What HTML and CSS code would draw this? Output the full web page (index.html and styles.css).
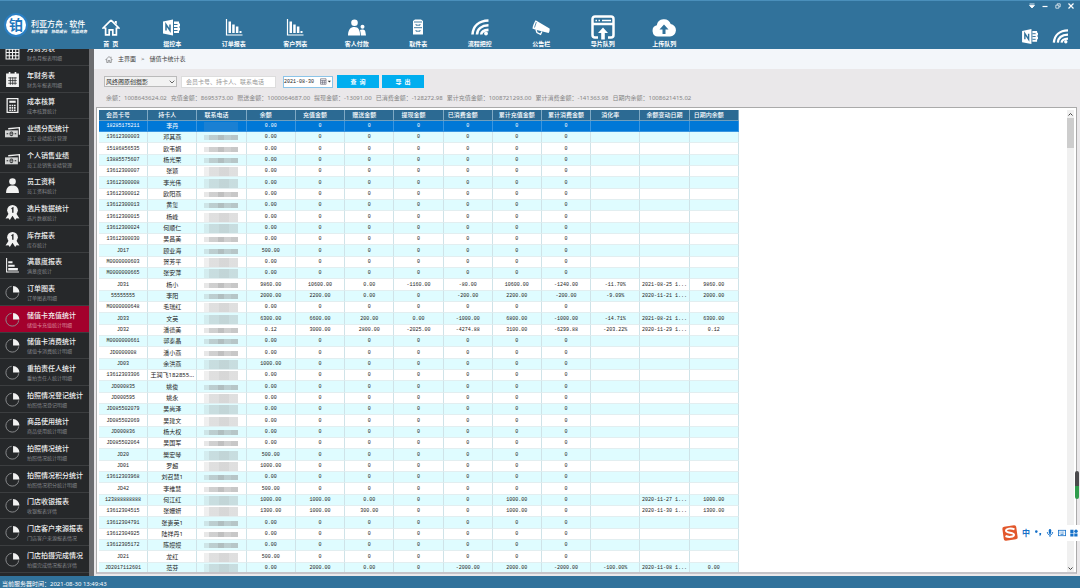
FILE: index.html
```html
<!DOCTYPE html>
<html lang="zh-CN">
<head>
<meta charset="UTF-8" />
<meta name="viewport" content="width=device-width, initial-scale=1" />
<title>利亚方舟·软件 - 储值卡统计表</title>
<link rel="stylesheet" href="styles.css">
</head>
<body>
  <!-- icon sprite -->
  <svg class="sprite" aria-hidden="true">
    <symbol id="i-home" viewBox="0 0 18 17"><path d="M9 1.2 1.2 9h2.3M9 1.2 16.8 9h-2.3M3.6 8.6v7.3h3.6v-5h3.6v5h3.6V8.6" fill="none" stroke="currentColor" stroke-width="1.7"/><path d="M12.8 2h2v3.4l-2-2z" fill="currentColor"/></symbol>
    <symbol id="i-note" viewBox="0 0 18 16"><path d="M0 2 10 0v16L0 14z" fill="currentColor"/><path d="M11 2h5v2h1v3h-1v1h1v3h-1v2.500h-5z" fill="currentColor"/><path d="M11 5h3.500M11 8h3.500M11 11h3.500" stroke="#31729b" stroke-width="1"/><path d="M3 11V5l4 6V5" fill="none" stroke="#31729b" stroke-width="1.5"/></symbol>
    <symbol id="i-chart" viewBox="0 0 18 17"><path d="M1.500 0v16H17.500" fill="none" stroke="currentColor" stroke-width="1.200"/><path d="M3.500 2.500h2.500V14H3.500zM7.200 5.500h2.500V14H7.200zM10.900 7.500h2.500V14h-2.500zM14.500 12h2v2h-2z" fill="currentColor"/></symbol>
    <symbol id="i-people" viewBox="0 0 18 17"><circle cx="6.500" cy="3.700" r="3.300" fill="currentColor"/><path d="M0 16.500c0-6 2.500-8.500 6.500-8.500s5.500 3 5.500 8.500z" fill="currentColor"/><circle cx="14.500" cy="7.800" r="2" fill="currentColor"/><path d="M12.800 16.500c0-3-.5-4-.8-5.500 1-.8 5-1 5.300 1.500l.7 4z" fill="currentColor"/></symbol>
    <symbol id="i-cabinet" viewBox="0 0 12 17"><path d="M1 2 3 .5h6L11 2v13.500H1z" fill="currentColor"/><path d="M2 3h8M2 8.700h8M4 5v1.200h4V5M4 11v1.200h4V11" fill="none" stroke="#31729b" stroke-width=".9"/></symbol>
    <symbol id="i-feed" viewBox="0 0 18 17"><g fill="none" stroke="currentColor" stroke-width="2.600"><path d="M1.500 15.500C2 7 8 1.800 17.500 1.500"/><path d="M6 15.500c.3-5.500 4.500-9 11.500-9.200"/><path d="M10.200 15.500c.2-2.800 2.800-4.400 7.300-4.600"/></g><circle cx="15" cy="14.500" r="1.900" fill="currentColor"/></symbol>
    <symbol id="i-horn" viewBox="0 0 20 17"><path d="M4 .5C2.500 3 1 6 .5 9.500L4 11l14.500 3.500c1-1.500 1.400-3.200 1-5z" fill="currentColor"/><path d="M4.500 11l1 3.200 4 1.800 1.500-3" fill="none" stroke="currentColor" stroke-width="1.500"/><path d="M4.800 2.500 2.800 8.500" fill="none" stroke="#31729b" stroke-width=".9"/></symbol>
    <symbol id="i-export" viewBox="0 0 24 25"><path d="M7 22.500H4A2.500 2.500 0 0 1 1.500 20V4A2.500 2.500 0 0 1 4 1.500h16A2.500 2.500 0 0 1 22.500 4v16a2.500 2.500 0 0 1-2.500 2.500h-3M1.500 9h21" fill="none" stroke="currentColor" stroke-width="2.500"/><path d="M4.500 5.500h1.500M7.500 5.500h1.500M11 5.500h9" stroke="currentColor" stroke-width="1.600"/><path d="M12 12.500 7 18h3.200v6.500h3.600V18H17z" fill="currentColor"/></symbol>
    <symbol id="i-cloud" viewBox="0 0 24 19"><path d="M6 18.500A5.700 5.700 0 0 1 4.800 7.300 7.200 7.200 0 0 1 18.700 6 6.300 6.300 0 0 1 18 18.500z" fill="currentColor"/><path d="M12 6.500 7.500 11.500h3V16h3v-4.500h3z" fill="#31729b"/></symbol>
    <symbol id="i-cal" viewBox="0 0 14 14"><path d="M1 1.500h2.500V0H5v1.500h4V0h1.500v1.500H13V14H1z" fill="currentColor"/><path d="M3 5.500h8M3 8h8M3 10.500h8M5 5v7M7.200 5v7M9.400 5v7" stroke="#26282a" stroke-width=".7"/></symbol>
    <symbol id="i-grid" viewBox="0 0 14 14"><path d="M1 1h12v12H1zM1 4h12M1 7h12M1 10h12M4 2v11M7 2v11M10 2v11" fill="none" stroke="currentColor" stroke-width="1"/></symbol>
    <symbol id="i-calc" viewBox="0 0 14 14"><path d="M2 .5h10v13H2z" fill="none" stroke="currentColor" stroke-width="1.200"/><path d="M4 3.500h6" stroke="currentColor" stroke-width="2"/><path d="M4 7h6M4 9.200h6M4 11.400h6" stroke="currentColor" stroke-width="1.500" stroke-dasharray="1.500 .7"/></symbol>
    <symbol id="i-cash" viewBox="0 0 14 14"><path d="M3 3.500 13.500 2.500v6.500" fill="none" stroke="currentColor" stroke-width="1.300"/><path d="M0 5h12v6.500H0z" fill="currentColor" opacity=".85"/><ellipse cx="6" cy="8.200" rx="1.800" ry="2.200" fill="#26282a"/><path d="M5 7.500h2M5 9h2" stroke="currentColor" stroke-width=".7"/><path d="M1.500 8.200h1.500M9 8.200h1.500" stroke="#26282a"/></symbol>
    <symbol id="i-user" viewBox="0 0 14 14"><circle cx="7" cy="3.300" r="3.100" fill="currentColor"/><path d="M1 14c0-4.500 2-7 6-7s6 2.500 6 7z" fill="currentColor"/></symbol>
    <symbol id="i-medal" viewBox="0 0 14 14"><circle cx="7" cy="5" r="5" fill="currentColor"/><path d="M3.500 8 .5 12.500l2.700-.2L4.500 14 7 10l2.500 4 1.300-1.700 2.700.2L10.500 8z" fill="currentColor"/><path d="M6 3.500 7.300 2.700v4.600" fill="none" stroke="#26282a" stroke-width="1.300"/></symbol>
    <symbol id="i-bars" viewBox="0 0 14 14"><path d="M1.500 0v13H13" fill="none" stroke="currentColor" stroke-width="1"/><path d="M3 3h4v2H3zM3 6.200h6v2H3zM3 9.400h9v2.200H3z" fill="currentColor"/></symbol>
    <symbol id="i-pie" viewBox="0 0 14 14"><path d="M6.200 1.200A6 6 0 1 0 12.800 7.800" fill="none" stroke="#8b8d8f" stroke-width=".9"/><path d="M7.500 1A6 6 0 0 1 13.500 7H7.500z" fill="currentColor"/></symbol>
  </svg>

  <header class="topbar">
    <div class="brand">
      <span class="brand-mark">铂</span>
      <div class="brand-text">
        <h1 class="brand-name">利亚方舟 · 软件</h1>
        <p class="brand-sub"><span>软件管理</span><span>协助成长</span><span>优盈商务</span></p>
      </div>
    </div>
    <nav class="mainnav">
      <a href="#"><svg class="ic"><use href="#i-home"/></svg>首&nbsp; 页</a>
      <a href="#"><svg class="ic"><use href="#i-note"/></svg>摄控本</a>
      <a href="#"><svg class="ic"><use href="#i-chart"/></svg>订单报表</a>
      <a href="#"><svg class="ic"><use href="#i-chart"/></svg>客户列表</a>
      <a href="#"><svg class="ic"><use href="#i-people"/></svg>客人付款</a>
      <a href="#"><svg class="ic"><use href="#i-cabinet"/></svg>取件表</a>
      <a href="#"><svg class="ic"><use href="#i-feed"/></svg>流程把控</a>
      <a href="#"><svg class="ic"><use href="#i-horn"/></svg>公告栏</a>
      <a href="#"><svg class="ic big"><use href="#i-export"/></svg>导片队列</a>
      <a href="#"><svg class="ic wide"><use href="#i-cloud"/></svg>上传队列</a>
    </nav>
    <div class="topright">
      <div class="winbtns">
        <button aria-label="菜单"><svg viewBox="0 0 6 6"><path d="M.5 1h5M.5 2.500h5L3 5z" fill="#fff" stroke="#fff" stroke-width=".8"/></svg></button>
        <button aria-label="最小化"><svg viewBox="0 0 6 6"><path d="M.5 3.500h5" stroke="#fff" stroke-width="1.200"/></svg></button>
        <button aria-label="还原"><svg viewBox="0 0 6 6"><path d="M.8 2.200h3v3h-3zM2.200 2V.8h3v3H4" fill="none" stroke="#fff" stroke-width=".7"/></svg></button>
        <button aria-label="关闭"><svg viewBox="0 0 6 6"><path d="M.5.5l5 5M5.500.5l-5 5" stroke="#fff" stroke-width="1.200"/></svg></button>
      </div>
      <div class="quick">
        <a href="#" aria-label="摄控本"><svg><use href="#i-note"/></svg></a>
        <a href="#" aria-label="流程把控"><svg><use href="#i-feed"/></svg></a>
      </div>
    </div>
  </header>

  <div class="main">
    <nav class="sidebar">
      <a href="#"><svg><use href="#i-grid"/></svg><span><b>月财务表</b><small>财务月报表明细</small></span></a>
      <a href="#"><svg><use href="#i-cal"/></svg><span><b>年财务表</b><small>财务年报表明细</small></span></a>
      <a href="#"><svg><use href="#i-calc"/></svg><span><b>成本核算</b><small>成本核算统计</small></span></a>
      <a href="#"><svg><use href="#i-cash"/></svg><span><b>业绩分配统计</b><small>员工业绩统计管理</small></span></a>
      <a href="#"><svg><use href="#i-cash"/></svg><span><b>个人销售业绩</b><small>员工总销售业绩管理</small></span></a>
      <a href="#"><svg><use href="#i-user"/></svg><span><b>员工资料</b><small>员工资料统计</small></span></a>
      <a href="#"><svg><use href="#i-medal"/></svg><span><b>选片数据统计</b><small>选片数据统计</small></span></a>
      <a href="#"><svg><use href="#i-medal"/></svg><span><b>库存报表</b><small>库存统计</small></span></a>
      <a href="#"><svg><use href="#i-bars"/></svg><span><b>满意度报表</b><small>满意度统计</small></span></a>
      <a href="#"><svg><use href="#i-pie"/></svg><span><b>订单图表</b><small>订单图表明细</small></span></a>
      <a href="#" class="active"><svg><use href="#i-pie"/></svg><span><b>储值卡充值统计</b><small>储值卡充值统计明细</small></span></a>
      <a href="#"><svg><use href="#i-pie"/></svg><span><b>储值卡消费统计</b><small>储值卡消费统计明细</small></span></a>
      <a href="#"><svg><use href="#i-pie"/></svg><span><b>重拍责任人统计</b><small>重拍责任人统计明细</small></span></a>
      <a href="#"><svg><use href="#i-pie"/></svg><span><b>拍照情况登记统计</b><small>拍照情况登记明细</small></span></a>
      <a href="#"><svg><use href="#i-pie"/></svg><span><b>商品使用统计</b><small>商品使用统计明细</small></span></a>
      <a href="#"><svg><use href="#i-pie"/></svg><span><b>拍照情况统计</b><small>拍照情况统计明细</small></span></a>
      <a href="#"><svg><use href="#i-pie"/></svg><span><b>拍照情况积分统计</b><small>拍照情况积分统计明细</small></span></a>
      <a href="#"><svg><use href="#i-pie"/></svg><span><b>门店收银报表</b><small>收银报表详情</small></span></a>
      <a href="#"><svg><use href="#i-pie"/></svg><span><b>门店客户来源报表</b><small>门店客户来源报表情况</small></span></a>
      <a href="#"><svg><use href="#i-pie"/></svg><span><b>门店拍摄完成情况</b><small>拍摄完成情况报表详情</small></span></a>
    </nav>

    <main class="content">
      <div class="crumbs">
        <svg><use href="#i-home"/></svg>
        <a href="#">主界面</a><span>&gt;</span><a href="#">储值卡统计表</a>
      </div>

      <form class="filters">
        <div class="shop">
          <select aria-label="门店"><option>风终阁原创摄影</option></select>
          <svg viewBox="0 0 6 4"><path d="M.7.7 3 3 5.300.7" fill="none" stroke="#555" stroke-width=".9"/></svg>
        </div>
        <input class="search" type="text" aria-label="关键字" placeholder="会员卡号、持卡人、联系电话">
        <div class="datebox">
          <input type="text" aria-label="日期" value="2021-08-30">
          <svg viewBox="0 0 10 6"><path d="M.5.5h5v5h-5zM.5 2h5M2.200 2v3.500M3.900 2v3.500M.5 3.700h5" fill="none" stroke="#667" stroke-width=".6"/><path d="M7 2.300h3L8.500 4z" fill="#333"/></svg>
        </div>
        <button type="button">查&nbsp; 询</button>
        <button type="button">导&nbsp; 出</button>
      </form>

      <div class="totals">
        <span>余额：1008643624.02</span>
        <span>充值金额：8695373.00</span>
        <span>赠送金额：1000064687.00</span>
        <span>提现金额：-13091.00</span>
        <span>已消费金额：-128272.98</span>
        <span>累计充值金额：1008721293.00</span>
        <span>累计消费金额：-141363.98</span>
        <span>日期内余额：1008621415.02</span>
      </div>

      <div class="gridframe">
        <div class="gridview">
          <table>
            <thead>
              <tr><th>会员卡号</th><th>持卡人</th><th>联系电话</th><th>余额</th><th>充值金额</th><th>赠送金额</th><th>提现金额</th><th>已消费金额</th><th class="long">累计充值金额</th><th class="long">累计消费金额</th><th>消化率</th><th class="long">余额变动日期</th><th>日期内余额</th></tr>
            </thead>
            <tbody id="rows"></tbody>
          </table>
        </div>
        <div class="scroller">
          <button aria-label="向上"><svg viewBox="0 0 5 3"><path d="M.5 2.500l2-2 2 2" fill="none" stroke="#444"/></svg></button>
          <div class="thumb"></div>
          <button aria-label="向下"><svg viewBox="0 0 5 3"><path d="M.5.5l2 2 2-2" fill="none" stroke="#444"/></svg></button>
        </div>
      </div>
    </main>
  </div>

  <footer class="statusbar">当前服务器时间：2021-08-30 13:49:43</footer>

  <div class="edge-meter"></div>

  <!-- input method bar -->
  <div class="ime">
    <svg class="ime-logo" viewBox="0 0 16 16"><rect x="1" y="1" width="14" height="14" rx="2" fill="#e2572b" transform="rotate(-8 8 8)"/><path d="M12.500 4.300C9 2.800 4 3.500 4 5.800c0 2.500 8 1.500 8 4 0 2.400-5.500 2.700-8.500 1.200" fill="none" stroke="#fff" stroke-width="2"/></svg>
    <span>中</span>
    <svg viewBox="0 0 8 8"><circle cx="2.300" cy="2.600" r="1.300" fill="#1570c8"/><path d="M5.300 4h1.800c.2 1.500-.3 2.500-1.400 3z" fill="#1570c8"/></svg>
    <svg viewBox="0 0 8 8"><rect x="2.800" y="0" width="2.400" height="5" rx="1.200" fill="#1570c8"/><path d="M1.300 3c0 4 5.400 4 5.400 0M4 6v2" fill="none" stroke="#1570c8" stroke-width=".9"/></svg>
    <svg viewBox="0 0 8 8"><rect x=".4" y="1.300" width="7.200" height="5.400" fill="none" stroke="#1570c8" stroke-width=".8"/><path d="M1.500 3h5M1.500 4.200h5" stroke="#1570c8" stroke-width=".7" stroke-dasharray=".8 .5"/><path d="M2.500 5.500h3" stroke="#1570c8" stroke-width=".7"/></svg>
    <svg viewBox="0 0 8 8"><path d="M.3.8h3.200V4H.3zM.3 4.600h3.200v3H.3zM4.300 4.600h3.200v3H4.300z" fill="#1570c8"/><circle cx="6" cy="2.300" r="1.700" fill="#1570c8"/></svg>
  </div>

  <script src="script.js"></script>
</body>
</html>
```

FILE: styles.css
```css
* {
  box-sizing: border-box;
}
html, body {
  margin: 0;
  padding: 0;
  height: 100%;
  overflow: hidden;
}
body {
  display: flex;
  flex-direction: column;
  font-family: "Noto Sans", "Noto Sans CJK SC", sans-serif;
  font-size: 6px;
  line-height: 8px;
  color: #222;
  background: #31729b;
}
a {
  color: inherit;
  text-decoration: none;
}
button, input, select {
  margin: 0;
  padding: 0;
  border: none;
  border-radius: 0;
  font: inherit;
  color: inherit;
}
svg {
  display: block;
  flex: none;
}
.sprite {
  position: absolute;
  width: 0;
  height: 0;
}

/* top bar */
.topbar {
  display: flex;
  flex: none;
  height: 49px;
  color: #fff;
  background: #31729b;
  border-top: 1px solid #4a8fbb;
}
.brand {
  display: flex;
  align-items: center;
  gap: 3px;
  width: 80px;
  padding-left: 4px;
  white-space: nowrap;
}
.brand-mark {
  flex: none;
  width: 24px;
  height: 24px;
  border: 2px solid #2a7fc4;
  border-radius: 50%;
  background: #fff;
  color: #2277bd;
  font-size: 14px;
  font-weight: bold;
  line-height: 20px;
  text-align: center;
}
.brand-text {
  padding-top: 3px;
}
.brand-name {
  margin: 0;
  font-size: 8px;
  font-weight: 500;
  line-height: 10px;
}
.brand-sub {
  display: flex;
  gap: 4px;
  margin: 0;
  font-size: 4px;
  font-style: italic;
  font-weight: bold;
  line-height: 6px;
}
.mainnav {
  display: flex;
  flex: none;
  width: 615px;
}
.mainnav a {
  display: flex;
  flex: 1;
  flex-direction: column;
  align-items: center;
  justify-content: flex-end;
  padding-bottom: 1px;
  font-weight: bold;
  white-space: nowrap;
}
.mainnav .ic {
  width: 18px;
  height: 17px;
  margin-bottom: 4px;
}
.mainnav .ic.big {
  width: 24px;
  height: 25px;
  margin-bottom: 0;
}
.mainnav .ic.wide {
  width: 24px;
  height: 19px;
  margin-bottom: 3px;
}
.topright {
  display: flex;
  flex-direction: column;
  align-items: flex-end;
  margin-left: auto;
  padding-right: 6px;
}
.winbtns {
  display: flex;
  gap: 7px;
  padding-top: 2px;
}
.winbtns button {
  width: 6px;
  background: none;
}
.winbtns svg {
  width: 6px;
  height: 6px;
}
.quick {
  display: flex;
  gap: 13px;
  padding: 20px 5px 0 0;
}
.quick svg {
  width: 17px;
  height: 15px;
}

/* body area */
.main {
  display: flex;
  flex: 1;
  min-height: 0;
}
.sidebar {
  display: flex;
  flex: none;
  flex-direction: column;
  justify-content: flex-end;
  width: 94px;
  padding-bottom: 3px;
  overflow: hidden;
  background: #26282a;
  border-right: 5px solid #6c6d70;
}
.sidebar a {
  display: flex;
  flex: none;
  align-items: center;
  gap: 7px;
  height: 27px;
  padding-left: 5px;
  color: #f2f2f2;
  white-space: nowrap;
  border-bottom: 1px solid #3c3e40;
}
.sidebar a:nth-child(3n) {
  height: 26px;
}
.sidebar a.active {
  background: #a3002c;
}
.sidebar svg {
  width: 15px;
  height: 15px;
}
.sidebar b {
  display: block;
  padding-top: 1px;
  font-size: 7px;
  font-weight: 500;
  line-height: 10px;
}
.sidebar small {
  display: block;
  font-size: 5px;
  line-height: 8px;
  color: #85878a;
}
.sidebar .active small {
  color: #d98a9d;
}
.content {
  display: flex;
  flex: 1;
  flex-direction: column;
  min-width: 0;
  background: #eae8ea;
}
.crumbs {
  display: flex;
  align-items: center;
  gap: 5px;
  height: 20px;
  padding-left: 11px;
  color: #444;
  background: #f3f6fa;
}
.crumbs svg {
  width: 8px;
  height: 7px;
  color: #777;
}

/* filters */
.filters {
  display: flex;
  align-items: center;
  gap: 4px;
  padding: 6px 0 0 10px;
}
.shop {
  display: flex;
  align-items: center;
  width: 73px;
  height: 11px;
  background: #f2f2f2;
  border: 1px solid #bbb;
}
.shop select {
  flex: 1;
  min-width: 0;
  height: 9px;
  padding-left: 1px;
  appearance: none;
  background: none;
}
.shop svg {
  width: 6px;
  height: 4px;
  margin-right: 1px;
}
.search {
  width: 95px;
  height: 12px;
  padding: 0 4px;
  background: #fff;
  border: 1px solid #ddd;
}
.search::placeholder {
  color: #999;
}
.datebox {
  display: flex;
  align-items: center;
  width: 50px;
  height: 12px;
  margin: 0 0 0 3px;
  background: #fff;
  border: 1px solid #8cc4e8;
}
.datebox input {
  width: 36px;
  font-family: "Liberation Mono", monospace;
  font-size: 5px;
  background: none;
}
.datebox svg {
  width: 11px;
  height: 7px;
}
.filters button {
  width: 42px;
  height: 13px;
  color: #fff;
  font-weight: bold;
  background: #00aeef;
}
.filters button:last-child {
  margin-left: -1px;
}
.totals {
  display: flex;
  gap: 4px;
  padding: 6px 0 5px 12px;
  color: #858585;
  white-space: nowrap;
}

/* data grid */
.gridframe {
  display: flex;
  flex: 1;
  min-height: 0;
  margin: 0 3px 2px 2px;
  padding: 2px 2px 0;
  background: #fff;
  border: 1px solid #aaa;
  border-bottom: 2px solid #c4c3c8;
}
.gridview {
  flex: 1;
  min-width: 0;
  overflow: hidden;
}
table {
  width: 640px;
  table-layout: fixed;
  border-collapse: separate;
  border-spacing: 0;
}
th, td {
  height: 11px;
  padding: 0;
  line-height: 9px;
  text-align: center;
  white-space: nowrap;
  overflow: hidden;
  border-right: 1px solid #cfe3e8;
  border-bottom: 1px solid #e2eef0;
}
th {
  padding-right: 10px;
  color: #fff;
  font-weight: 500;
  background: #2c6a93;
  border-right-color: #7fa9c4;
  border-bottom-color: #6f9fbd;
}
th.long {
  padding-right: 0;
}
td {
  padding-top: 1px;
  color: #222;
  font-family: "Liberation Mono", "Noto Sans CJK SC", monospace;
  font-size: 5px;
}
td.name {
  font-family: "Noto Sans", "Noto Sans CJK SC", sans-serif;
  font-size: 6px;
}
tbody tr:nth-child(3n) td {
  height: 12px;
}
tbody tr:nth-child(even) td {
  background: #dffcff;
}
tbody tr:first-child td {
  color: #fff;
  background: #0078d7;
  border-color: #3a96e0;
}

/* masked phone numbers */
.mask {
  width: 34px;
  height: 5px;
  margin-left: 7px;
  background: linear-gradient(90deg, #8883 0 15%, #8886 15% 40%, #8888 40% 60%, #8886 60% 80%, #8887 80%);
}
.mask.soft {
  height: 9px;
  background: linear-gradient(90deg, #8882 0 15%, #8884 15% 45%, #8885 45% 75%, #8884 75%);
}
tr:first-child .mask {
  background: #1a80d3;
}

/* scroll bar */
.scroller {
  display: flex;
  flex: none;
  flex-direction: column;
  width: 7px;
  background: #f0f0f0;
}
.scroller button {
  display: flex;
  align-items: center;
  justify-content: center;
  height: 8px;
  background: none;
}
.scroller button:last-child {
  margin-top: auto;
}
.scroller svg {
  width: 5px;
  height: 3px;
}
.thumb {
  height: 30px;
  background: #cdcdcd;
}

.statusbar {
  flex: none;
  height: 12px;
  padding: 4px 0 0 2px;
  color: #fff;
  background: #31729b;
}

/* floating pieces */
.edge-meter {
  position: absolute;
  right: 1px;
  top: 471px;
  width: 4px;
  height: 28px;
  border-radius: 2px;
  background: linear-gradient(#4a4a4c 0 55%, #2f9c4c 55%);
}
.ime {
  position: absolute;
  right: 0;
  bottom: 47px;
  display: flex;
  align-items: center;
  gap: 4px;
  padding-right: 2px;
  color: #1570c8;
  font-size: 8px;
  font-weight: bold;
  background: #fff;
}
.ime svg {
  width: 8px;
  height: 8px;
}
.ime .ime-logo {
  width: 16px;
  height: 16px;
}
```

FILE: script.js
```javascript
// card no, holder, balance, recharge, gift, withdraw, spent, total recharge, total spent, rate, date, period balance
// missing amounts are shown as 0
const cards = [
  ['18285175211', '李丹', '0.00'],
  ['13612300003', '邓其燕', '0.00'],
  ['15186856535', '欧韦娟', '0.00'],
  ['13885575607', '杨光荣', '0.00'],
  ['13612300007', '张颖', '0.00'],
  ['13612300008', '李光伟', '0.00'],
  ['13612300012', '欧阳燕', '0.00'],
  ['13612300013', '黄玺', '0.00'],
  ['13612300015', '杨峰', '0.00'],
  ['13612300024', '何顺仁', '0.00'],
  ['13612300030', '吴昌美', '0.00'],
  ['JD17', '顾业海', '500.00'],
  ['M0000000603', '贺芳平', '0.00'],
  ['M0000000665', '张安萍', '0.00'],
  ['JD31', '杨小', '9860.00', '10600.00', '0.00', '-1160.00', '-80.00', '10600.00', '-1240.00', '-11.70%', '2021-08-25 1...', '9860.00'],
  ['55555555', '李阳', '2000.00', '2200.00', '0.00', '0', '-200.00', '2200.00', '-200.00', '-9.09%', '2020-11-21 1...', '2000.00'],
  ['M0000000648', '毛瑞红', '0.00'],
  ['JD33', '文英', '6300.00', '6600.00', '200.00', '0.00', '-1000.00', '6800.00', '-1000.00', '-14.71%', '2021-08-21 1...', '6300.00'],
  ['JD32', '潘德美', '0.12', '3000.00', '2800.00', '-2025.00', '-4274.88', '3100.00', '-6299.88', '-203.22%', '2020-11-29 1...', '0.12'],
  ['M0000000661', '郭泰晶', '0.00'],
  ['JD0000008', '潘小燕', '0.00'],
  ['JD03', '余洪燕', '1000.00'],
  ['13612303306', '王润飞182855...', '0.00'],
  ['JD000835', '姚俊', '0.00'],
  ['JD000595', '姚永', '0.00'],
  ['JD085502079', '吴尚泽', '0.00'],
  ['JD085502069', '吴建文', '0.00'],
  ['JD000836', '杨大权', '0.00'],
  ['JD085502064', '吴国军', '0.00'],
  ['JD20', '樊宏琴', '500.00'],
  ['JD01', '罗超', '1000.00'],
  ['13612303968', '刘召慧1', '0.00'],
  ['JD42', '李维慧', '500.00'],
  ['123888888888', '何江红', '1000.00', '1000.00', '0.00', '0', '0', '1000.00', '0', '', '2020-11-27 1...', '1000.00'],
  ['13612304515', '张姗妍', '1300.00', '1000.00', '300.00', '0', '0', '1000.00', '0', '', '2020-11-30 1...', '1300.00'],
  ['13612304791', '张贵英1', '0.00'],
  ['13612304925', '陆祥丹1', '0.00'],
  ['13612305172', '陈嫚嫚', '0.00'],
  ['JD21', '龙红', '500.00'],
  ['JD2017112601', '范芬', '0.00', '2000.00', '0.00', '0', '-2000.00', '2000.00', '-2000.00', '-100.00%', '2020-11-08 1...', '0.00']
];

// rows whose phone mask fills the whole cell
const softRows = [1, 5, 6, 9, 10, 13, 14, 17, 18, 22, 23, 25, 26, 27, 30, 31, 34, 35, 39, 40];

document.getElementById('rows').innerHTML = cards.map((card, i) => {
  const [no, name, ...rest] = card;
  const soft = softRows.includes(i + 1) ? ' soft' : '';
  let html = '<td>' + no + '</td><td class="name">' + name + '</td><td><div class="mask' + soft + '"></div></td>';
  for (let c = 0; c < 10; c++) {
    const val = rest[c] !== undefined ? rest[c] : (c < 7 ? '0' : '');
    html += '<td>' + val + '</td>';
  }
  return '<tr>' + html + '</tr>';
}).join('');
```
